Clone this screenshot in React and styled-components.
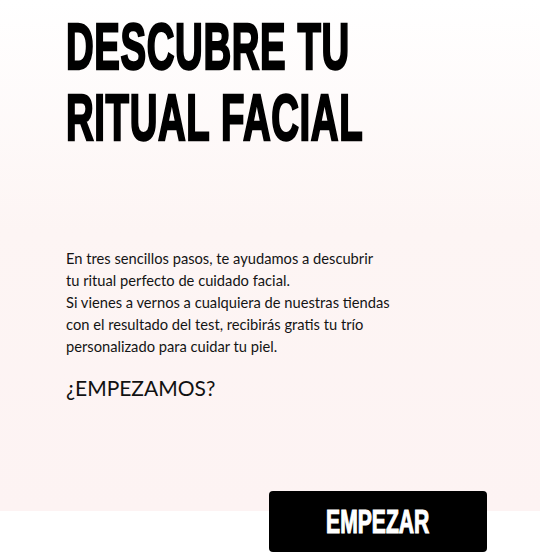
import React from "react";
import styled, { createGlobalStyle } from "styled-components";

const Global = createGlobalStyle`
  html, body { margin: 0; padding: 0; background: #ffffff; }
  body { width: 540px; overflow: hidden; }
  * { box-sizing: border-box; }
`;

const Page = styled.div`
  width: 540px;
  display: flex;
  flex-direction: column;
`;

const Hero = styled.section`
  height: 511px;
  padding: 12px 0 0 66px;
  background: linear-gradient(180deg, #ffffff 0%, #fdf5f4 45%, #fdf3f3 100%);
  display: flex;
  flex-direction: column;
`;

const Title = styled.h1`
  margin: 0;
  font-family: "Liberation Sans", Arial, sans-serif;
  font-weight: 700;
  font-size: 64px;
  line-height: 71px;
  letter-spacing: 1px;
  color: #000;
  -webkit-text-stroke: 2.4px #000;
`;

const TitleLine = styled.span`
  display: block;
  width: max-content;
  transform: scaleX(0.6);
  transform-origin: left center;
`;

const Text = styled.p`
  margin: 93px 0 0 0;
  font-family: Lato, "Open Sans", sans-serif;
  font-size: 14.7px;
  line-height: 22px;
  color: #141414;
`;

const Question = styled.p`
  margin: 18px 0 0 0;
  font-family: Lato, "Open Sans", sans-serif;
  font-size: 21px;
  line-height: 26px;
  color: #111;
`;

const Actions = styled.div`
  display: flex;
  justify-content: flex-end;
  padding-right: 53px;
  margin-top: -20px;
`;

const Button = styled.button`
  width: 218px;
  height: 61px;
  border: none;
  border-radius: 4px;
  background: #000;
  color: #fff;
  cursor: pointer;
  display: flex;
  align-items: center;
  justify-content: center;
  padding: 0;
`;

const ButtonLabel = styled.span`
  display: inline-block;
  font-family: "Liberation Sans", Arial, sans-serif;
  font-weight: 700;
  font-size: 33px;
  line-height: 1;
  -webkit-text-stroke: 1.2px #fff;
  transform: scaleX(0.64);
  transform-origin: center;
`;

export default function App() {
  return (
    <Page>
      <Global />
      <Hero>
        <Title>
          <TitleLine>DESCUBRE TU</TitleLine>
          <TitleLine>RITUAL FACIAL</TitleLine>
        </Title>
        <Text>
          En tres sencillos pasos, te ayudamos a descubrir
          <br />
          tu ritual perfecto de cuidado facial.
          <br />
          Si vienes a vernos a cualquiera de nuestras tiendas
          <br />
          con el resultado del test, recibirás gratis tu trío
          <br />
          personalizado para cuidar tu piel.
        </Text>
        <Question>¿EMPEZAMOS?</Question>
      </Hero>
      <Actions>
        <Button>
          <ButtonLabel>EMPEZAR</ButtonLabel>
        </Button>
      </Actions>
    </Page>
  );
}
